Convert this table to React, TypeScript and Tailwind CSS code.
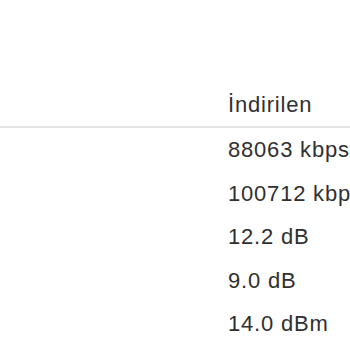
const rows = ["88063 kbps", "100712 kbps", "12.2 dB", "9.0 dB", "14.0 dBm"]

export default function App() {
  return (
    <div
      className="w-[350px] h-[350px] overflow-hidden bg-white text-[#303030] text-[22px] leading-[33px] tracking-[0.8px]"
      style={{ fontFamily: '"Liberation Sans", Arial, sans-serif' }}
    >
      <div className="pt-[83px] w-[600px]">
        {/* başlık */}
        <div className="grid grid-cols-[228px_1fr] pt-[5px] pb-[5px] border-b-2 border-[#e4e4e4]">
          <div />
          <div className="whitespace-nowrap">İndirilen</div>
        </div>
        {rows.map((value) => (
          <div key={value} className="grid grid-cols-[228px_1fr] h-[43.5px] pt-[5px]">
            <div />
            <div className="whitespace-nowrap">{value}</div>
          </div>
        ))}
      </div>
    </div>
  )
}
